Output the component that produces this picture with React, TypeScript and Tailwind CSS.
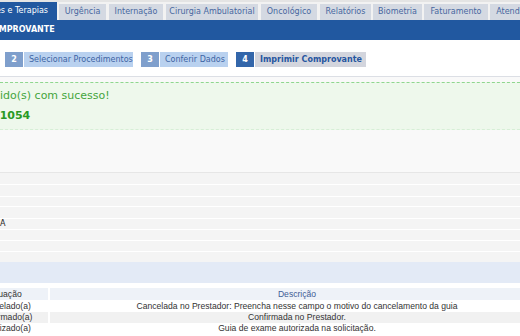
import React from 'react'

const tabs = [
  { label: 'Urgência', cls: 'ml-[2px] w-[47px]' },
  { label: 'Internação', cls: 'ml-[3px] w-[54px]' },
  { label: 'Cirurgia Ambulatorial', cls: 'ml-[3px] w-[92px]' },
  { label: 'Oncológico', cls: 'ml-[3px] w-[56px]' },
  { label: 'Relatórios', cls: 'ml-[3px] w-[51px]' },
  { label: 'Biometria', cls: 'ml-[2px] w-[49px]' },
  { label: 'Faturamento', cls: 'ml-[2px] w-[64px]' },
  { label: 'Atendimento', cls: 'ml-[2px] w-[64px]' },
]

const stripeRows = [
  { h: 'h-[11px]', text: '' },
  { h: 'h-[11px]', text: '' },
  { h: 'h-[9px]', text: '' },
  { h: 'h-[11px]', text: '' },
  { h: 'h-[10px]', text: 'A' },
  { h: 'h-[10px]', text: '' },
  { h: 'h-[10px]', text: '' },
  { h: 'h-[10px]', text: '' },
]

const legend = [
  { sit: 'Cancelado(a)', desc: 'Cancelada no Prestador: Preencha nesse campo o motivo do cancelamento da guia', bg: 'bg-white', h: 'h-[12px]' },
  { sit: 'Confirmado(a)', desc: 'Confirmada no Prestador.', bg: 'bg-[#f1f1f1]', h: 'h-[11px]' },
  { sit: 'Autorizado(a)', desc: 'Guia de exame autorizada na solicitação.', bg: 'bg-white', h: 'h-[11px]' },
]

export default function App() {
  return (
    <div className="w-[520px] h-[336px] overflow-hidden bg-white font-['DejaVu_Sans',Verdana,sans-serif]">
      {/* top strip + tabs */}
      <div className="h-[2px] bg-[#e4e4e4]"></div>
      <div className="flex items-end h-[18px] bg-[#f2f2f2] whitespace-nowrap">
        <div className="flex items-center justify-end shrink-0 w-[57px] h-[18px] pr-[9px] overflow-hidden bg-[#2158a0] text-white text-[8px]">
          Exames e Terapias
        </div>
        {tabs.map((t) => (
          <div
            key={t.label}
            className={`${t.cls} shrink-0 h-[16px] flex items-center justify-center bg-[#d4d9e2] text-[#4767a0] text-[8px]`}
          >
            {t.label}
          </div>
        ))}
      </div>

      {/* title bar */}
      <div className="h-[20px] bg-[#2158a0] flex items-center">
        <span className="ml-[-14px] text-white font-bold text-[8px] whitespace-nowrap">COMPROVANTE</span>
      </div>

      {/* steps */}
      <div className="h-[37px] pt-[12px] pl-[5px] flex items-start border-b border-[#dcdfe5] text-[8px] whitespace-nowrap">
        <div className="flex gap-[1px]">
          <div className="w-[18px] h-[15px] bg-[#7f9fcc] text-white font-bold flex items-center justify-center">2</div>
          <div className="w-[109px] h-[15px] bg-[#b9d1ef] text-[#3d64a4] flex items-center pl-[5px]">Selecionar Procedimentos</div>
        </div>
        <div className="flex gap-[1px] ml-[8px]">
          <div className="w-[18px] h-[15px] bg-[#7f9fcc] text-white font-bold flex items-center justify-center">3</div>
          <div className="w-[68px] h-[15px] bg-[#b9d1ef] text-[#3d64a4] flex items-center pl-[5px]">Conferir Dados</div>
        </div>
        <div className="flex gap-[1px] ml-[8px]">
          <div className="w-[18px] h-[15px] bg-[#3366aa] text-white font-bold flex items-center justify-center">4</div>
          <div className="w-[111px] h-[15px] bg-[#d3d5dd] text-[#2656a0] font-bold flex items-center pl-[5px]">Imprimir Comprovante</div>
        </div>
      </div>

      {/* result area */}
      <div className="bg-[#f9f9f9] pt-[5px]">
        <div className="h-[48px] bg-[#eef8ec] border-t border-dashed border-[#8fd68f] border-b border-b-[#d6efd6] whitespace-nowrap">
          <div className="mt-[6px] text-[11px] text-[#44a53c] leading-[13px]">ido(s) com sucesso!</div>
          <div className="mt-[7px] ml-[-8px] text-[11px] font-bold text-[#2a9a24] leading-[14px]">11054</div>
        </div>
        <div className="h-[42px]"></div>
        <div className="border-t border-[#e6e6e6]">
          {stripeRows.map((r, i) => (
            <div
              key={i}
              className={`${r.h} bg-[#f4f4f4] ${i < 7 ? 'border-b border-white' : ''} box-content flex items-center text-[8px] text-[#222] leading-none`}
            >
              {r.text}
            </div>
          ))}
        </div>
      </div>

      {/* legend band */}
      <div className="h-[21px] bg-[#e3eaf6]"></div>
      <div className="h-[5px]"></div>
      <div className="font-['Liberation_Sans',Arial,sans-serif] text-[8.6px] text-[#333] whitespace-nowrap">
        <div className="flex gap-[2px] h-[12px] ml-[-38px]">
          <div className="w-[86px] shrink-0 bg-[#eef2f8] flex items-center justify-center">Situação</div>
          <div className="w-[494px] shrink-0 bg-[#eef2f8] flex items-center justify-center text-[#3e5e96]">Descrição</div>
        </div>
        {legend.map((l) => (
          <div key={l.sit} className={`flex gap-[2px] ${l.h} ml-[-38px]`}>
            <div className={`w-[86px] shrink-0 ${l.bg} flex items-center justify-center`}>{l.sit}</div>
            <div className={`w-[494px] shrink-0 ${l.bg} flex items-center justify-center`}>{l.desc}</div>
          </div>
        ))}
      </div>
    </div>
  )
}
